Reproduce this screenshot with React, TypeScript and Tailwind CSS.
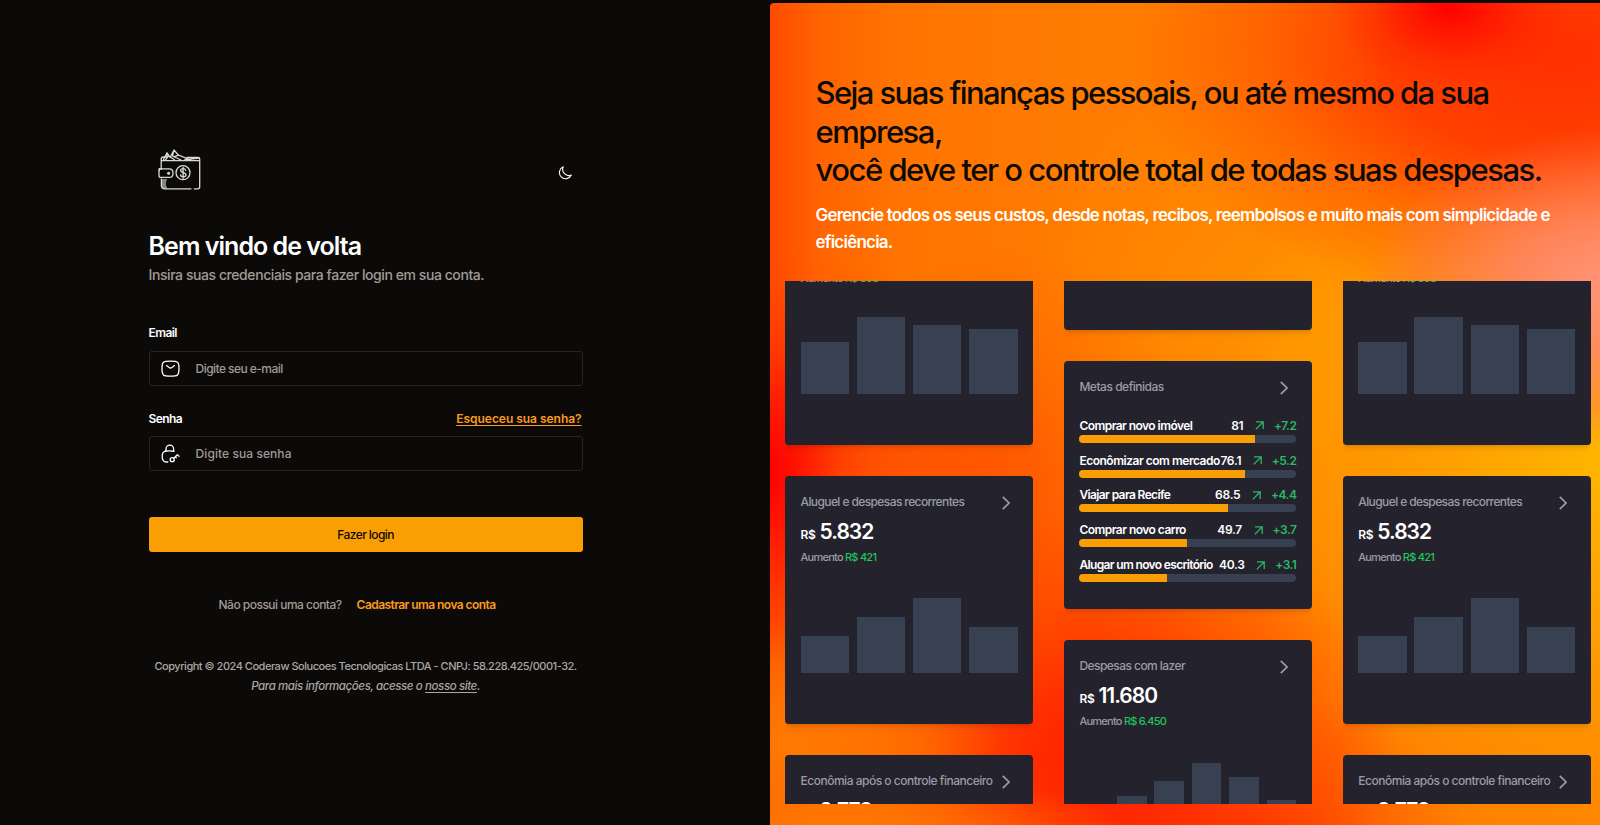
import React from "react";

const mesh = [
  "radial-gradient(ellipse 120px 80px at 680px 5px, rgba(255,0,0,1) 0%, rgba(255,0,0,.6) 30%, rgba(255,0,0,.2) 65%, rgba(255,0,0,0) 100%)",
  "radial-gradient(ellipse 100px 190px at 0px 470px, rgba(255,0,0,1) 0%, rgba(255,10,0,.7) 35%, rgba(255,30,0,.25) 70%, rgba(255,40,0,0) 100%)",
  "radial-gradient(ellipse 210px 130px at 20px 740px, rgba(255,122,0,1) 0%, rgba(255,118,0,.75) 45%, rgba(255,110,0,0) 100%)",
  "radial-gradient(ellipse 300px 60px at 60px 830px, rgba(255,128,0,.9) 0%, rgba(255,118,0,.5) 50%, rgba(255,110,0,0) 100%)",
  "radial-gradient(ellipse 300px 200px at 0px 450px, rgba(255,50,0,.7) 0%, rgba(255,60,0,.45) 45%, rgba(255,80,0,0) 100%)",
  "radial-gradient(ellipse 260px 160px at 850px 285px, rgba(255,150,125,1) 0%, rgba(255,135,105,.85) 40%, rgba(255,120,80,.45) 75%, rgba(255,110,50,0) 100%)",
  "radial-gradient(ellipse 430px 260px at 790px 50px, rgba(255,48,0,1) 0%, rgba(255,56,0,.9) 40%, rgba(255,70,0,.45) 70%, rgba(255,90,0,0) 100%)",
  "radial-gradient(ellipse 290px 260px at 340px 760px, rgba(255,28,0,1) 0%, rgba(255,36,0,.85) 30%, rgba(255,55,0,.45) 65%, rgba(255,80,0,0) 100%)",
  "radial-gradient(ellipse 200px 150px at 500px 840px, rgba(255,50,0,.8) 0%, rgba(255,70,0,.4) 55%, rgba(255,90,0,0) 100%)",
  "radial-gradient(ellipse 200px 300px at 240px 540px, rgba(255,60,0,.55) 0%, rgba(255,70,0,.3) 55%, rgba(255,100,0,0) 100%)",
  "radial-gradient(ellipse 400px 420px at 850px 450px, rgba(255,184,0,1) 0%, rgba(255,165,0,.7) 50%, rgba(255,150,0,0) 100%)",
  "radial-gradient(ellipse 300px 300px at 540px 340px, rgba(255,148,0,1) 0%, rgba(255,142,0,.65) 45%, rgba(255,130,0,0) 100%)",
  "linear-gradient(90deg, #ff4a00 0px, #ff6400 50px, #ff7400 130px, #ff7c00 330px, #ff8000 830px)",
].join(",");

function Chevron() {
  return (
    <svg className="h-[14px] w-2 shrink-0 text-[#9b9ba8]" viewBox="0 0 8 14" fill="none" stroke="currentColor" strokeWidth="1.7">
      <path d="M.8 .8 7 7 .8 13.2" />
    </svg>
  );
}

function Card({ title, tracking, children }: { title: string; tracking: string; children?: React.ReactNode }) {
  return (
    <article className="flex h-[248px] w-full shrink-0 flex-col rounded-[4px] bg-[#24232d] px-[15.5px] shadow-md">
      <header className="mt-[18px] flex h-4 items-center justify-between pr-[8px]">
        <h3 className={`text-[12px] leading-4 font-medium whitespace-nowrap text-[#9b9ba8] ${tracking}`}>{title}</h3>
        <div className="pt-[2px]">
          <Chevron />
        </div>
      </header>
      {children}
    </article>
  );
}

function Expense(props: { title: string; tracking: string; amount: string; rise: string; bars: number[] }) {
  return (
    <Card title={props.title} tracking={props.tracking}>
      <p className="mt-[10px] flex h-6 items-baseline gap-1 leading-6 font-semibold whitespace-nowrap text-white">
        <span className="text-[12px] tracking-[-0.3px]">R$</span>
        <span className="text-[21px] tracking-[-1px]">{props.amount}</span>
      </p>
      <p className="mt-[5px] text-[11px] leading-4 font-medium tracking-[-0.75px] text-[#9b9ba8]">
        Aumento <span className="text-[#22c55e]">{props.rise}</span>
      </p>
      <div className="mt-[31.5px] flex h-[77px] shrink-0 items-end gap-[7.8px]">
        {props.bars.map((h, i) => (
          <div key={i} className="flex-1 bg-[#374151]" style={{ height: h }} />
        ))}
      </div>
    </Card>
  );
}

const goals = [
  { name: "Comprar novo imóvel", tracking: "tracking-[-0.55px]", value: "81", rise: "+7.2", pct: 81 },
  { name: "Econômizar com mercado", tracking: "tracking-[-0.48px]", value: "76.1", rise: "+5.2", pct: 76.1 },
  { name: "Viajar para Recife", tracking: "tracking-[-0.62px]", value: "68.5", rise: "+4.4", pct: 68.5 },
  { name: "Comprar novo carro", tracking: "tracking-[-0.53px]", value: "49.7", rise: "+3.7", pct: 49.7 },
  { name: "Alugar um novo escritório", tracking: "tracking-[-0.65px]", value: "40.3", rise: "+3.1", pct: 40.3 },
];

function Goals() {
  return (
    <Card title="Metas definidas" tracking="tracking-[-0.48px]">
      <div className="mt-[22.5px] flex flex-col gap-[9.8px]">
        {goals.map((g) => (
          <div key={g.name} className="flex h-[25px] flex-col justify-between">
            <div className="flex h-4 items-center text-[12px] leading-4 font-semibold whitespace-nowrap text-white">
              <span className={`flex-1 ${g.tracking}`}>{g.name}</span>
              <span className="tracking-[-0.25px]">{g.value}</span>
              <svg className="mr-[10px] ml-[11.5px] size-[9px] text-[#2bb867]" viewBox="0 0 9 9" fill="none" stroke="currentColor" strokeWidth="1.3">
                <path d="M1 .8h7.2V8M8 1 .8 8.4" />
              </svg>
              <span className="tracking-[-0.5px] text-[#2bb867]">{g.rise}</span>
            </div>
            <div className="h-2 overflow-hidden rounded-full bg-[#374151]">
              <div className="h-full bg-[#fa9f03]" style={{ width: `${g.pct}%` }} />
            </div>
          </div>
        ))}
      </div>
    </Card>
  );
}

function SideColumn() {
  return (
    <div className="flex h-[523px] w-[248px] shrink-0 flex-col justify-start overflow-hidden">
      <div className="-mt-[84.5px] flex flex-col gap-[31px]">
        <Expense title="Alimentação" tracking="tracking-[-0.3px]" amount="2.530" rise="R$ 398" bars={[52, 77, 69, 65]} />
        <Expense title="Aluguel e despesas recorrentes" tracking="tracking-[-0.6px]" amount="5.832" rise="R$ 421" bars={[37, 56, 75, 46]} />
        <Expense title="Econômia após o controle financeiro" tracking="tracking-[-0.49px]" amount="2.778" rise="R$ 310" bars={[37, 56, 75, 46]} />
      </div>
    </div>
  );
}

function MiddleColumn() {
  return (
    <div className="flex h-[523px] w-[248px] shrink-0 flex-col justify-start overflow-hidden">
      <div className="-mt-[198.8px] flex flex-col gap-[31px]">
        <Card title="" tracking="" />
        <Goals />
        <Expense title="Despesas com lazer" tracking="tracking-[-0.55px]" amount="11.680" rise="R$ 6.450" bars={[25, 42, 56.5, 75, 61, 37.5]} />
      </div>
    </div>
  );
}

function WalletLogo() {
  return (
    <svg className="h-[42px] w-[43px] text-[#d8d8d6]" viewBox="0 0 43 42" fill="none" stroke="currentColor" strokeWidth="1.3" strokeLinecap="round" strokeLinejoin="round">
      <path d="M3.2 20V10.5c0-1.6.7-2.5 2.2-2.5H9M3.5 11.7h37.8M29 8.3h11c1.1 0 1.7.6 1.7 1.5v28c0 1.2-.9 2-2 2h-3.5M33 39.8H7c-2.300 0-3.600-1.200-3.600-3.300v-6.700" />
      <path d="M5.500 10.800 9 3.800l2.500 3.500M7.500 10.800l3-4 6 4M12 8.500 16 1l4.500 5.200L33 11M16 1l-1.500 6 8.500 4M20.500 6.200l-4 1.500M9 3.800v3.500M27 10.500c4-.5 8-1 14.300-1.500" />
      <path d="M1 21.500c0-1 .6-1.600 1.500-1.600h8.800c5 0 5 8.500 0 8.500H2.500C1.500 28.400 1 27.800 1 27z" />
      <path d="M1.200 21.500V19.700L3.200 20" />
      <circle cx="10.600" cy="24.200" r=".9" fill="currentColor" />
      <circle cx="25" cy="23.700" r="7" />
      <path d="M27.700 21.500c-.2-1.200-1.200-1.800-2.600-1.800s-2.500.7-2.500 1.900c0 2.800 5.400 1.400 5.400 4.200 0 1.300-1.200 2-2.700 2s-2.700-.7-2.800-2M25.100 18.300v11" />
      <path d="M3.400 30v6c0 2.300 1.600 3.800 4.500 3.800 1 0 1.500-.5 1-1.500-1.600-2.300-1.300-5.300.3-8.300z" fill="currentColor" stroke="none" opacity=".6" />
    </svg>
  );
}

function Field({ label, placeholder, icon, link, labelTracking, tracking }: { label: string; placeholder: string; icon: React.ReactNode; link?: boolean; labelTracking: string; tracking: string }) {
  return (
    <div className="flex flex-col">
      <div className="flex h-4 items-center justify-between text-[12px] leading-4 whitespace-nowrap">
        <label className={`font-semibold text-white ${labelTracking}`}>{label}</label>
        {link && <a className="pr-px font-semibold tracking-[-0.03px] text-[#fa9a1e] underline underline-offset-2">Esqueceu sua senha?</a>}
      </div>
      <div className={`${link ? "mt-[9px]" : "mt-[10px]"} flex h-[35px] items-center rounded-[3px] border border-[#272523] pl-[11px]`}>
        {icon}
        <span className={`ml-4 text-[12px] leading-4 font-medium whitespace-nowrap text-[#a09b96] ${tracking}`}>{placeholder}</span>
      </div>
    </div>
  );
}

function MailIcon() {
  return (
    <svg className="h-[18px] w-[19px] text-white" viewBox="0 0 19 18" fill="none" stroke="currentColor" strokeWidth="1.300" strokeLinecap="round" strokeLinejoin="round">
      <path d="M9.500 1.100c7.400 0 8.500.8 8.500 7.500s-1.100 7.600-8.500 7.600S1 15.300 1 8.600s1.100-7.500 8.500-7.500Z" />
      <path d="m5.500 5.600 2.600 1.900c.9.600 1.900.6 2.800 0l2.600-1.900" />
    </svg>
  );
}

function LockIcon() {
  return (
    <svg className="h-[19px] w-[19px] text-white" viewBox="0 0 19 19" fill="none" stroke="currentColor" strokeWidth="1.300" strokeLinecap="round" strokeLinejoin="round">
      <path d="M5 7V5a3.800 3.800 0 0 1 7.600 0v2M13 7.300C11.800 6.900 5.500 6.700 3.700 7.300c-1.800.6-2.500 2-2.500 5 0 3.600.9 5.500 3.700 5.700h1.900" />
      <circle cx="11.200" cy="15.700" r="2" />
      <path d="m12.700 14.200 3.600-3.400 1.700 1.500M14.300 12.800l1 1" />
    </svg>
  );
}

export default function App() {
  return (
    <main className="flex h-[825px] w-[1600px] overflow-hidden bg-[#0c0a09] font-['Inter',sans-serif] text-white">
      <section className="flex w-[770px] shrink-0 flex-col pl-[148.600px]">
        <div className="flex w-[434px] flex-col">
          <div className="mt-[149px] flex h-[42px] items-center justify-between pr-[11px] pl-[9px]">
            <WalletLogo />
            <svg className="mt-[6px] size-[14px] text-white" viewBox="0 0 14 14" fill="none" stroke="currentColor" strokeWidth="1.100" strokeLinejoin="round">
              <path d="M5.200.8A6.200 6.200 0 1 0 13.300 9 6.200 6.200 0 0 1 5.200.8Z" />
            </svg>
          </div>
          <h1 className="mt-[39px] text-[25px] leading-8 font-semibold tracking-[-0.970px] whitespace-nowrap">Bem vindo de volta</h1>
          <p className="mt-[3px] text-[14px] leading-5 font-medium tracking-[-0.430px] whitespace-nowrap text-[#a09b96]">Insira suas credenciais para fazer login em sua conta.</p>
          <div className="mt-[40px]">
            <Field label="Email" placeholder="Digite seu e-mail" icon={<MailIcon />} labelTracking="tracking-[-0.600px]" tracking="tracking-[-0.550px]" />
          </div>
          <div className="mt-[25px]">
            <Field label="Senha" placeholder="Digite sua senha" icon={<LockIcon />} link labelTracking="tracking-[-0.600px]" tracking="tracking-[0.070px]" />
          </div>
          <button className="mt-[46px] h-[35px] rounded-[3px] bg-[#fa9f03] text-[12px] leading-4 font-medium tracking-[-0.570px] text-[#0c0a09]">Fazer login</button>
          <p className="mt-[45px] flex justify-center gap-[15px] pr-[17px] text-[12px] leading-4 font-medium whitespace-nowrap text-[#a09b96]">
            <span className="tracking-[-0.520px]">Não possui uma conta?</span>
            <a className="font-semibold tracking-[-0.560px] text-[#fa9a1e]">Cadastrar uma nova conta</a>
          </p>
          <footer className="mt-[45px] flex flex-col items-center gap-[4px] leading-4 font-medium whitespace-nowrap text-[#aaa6a2]">
            <p className="text-[11px] leading-4 tracking-[-0.480px]">Copyright © 2024 Coderaw Solucoes Tecnologicas LTDA - CNPJ: 58.228.425/0001-32.</p>
            <p className="text-[11.500px] leading-4 tracking-[-0.400px] italic">Para mais informações, acesse o <a className="underline underline-offset-2">nosso site</a>.</p>
          </footer>
        </div>
      </section>
      <section className="mt-[3px] flex w-[830px] shrink-0 flex-col overflow-hidden rounded-tl-[4px]" style={{ background: mesh }}>
        <h2 className="mt-[71px] pl-[45.500px] text-[31px] leading-[38.700px] font-medium tracking-[-1.480px] whitespace-nowrap text-[#0c0a09]">
          <span className="tracking-[-1.590px]">Seja suas finanças pessoais, ou até mesmo da sua</span>
          <br />
          empresa,
          <br />
          você deve ter o controle total de todas suas despesas.
        </h2>
        <p className="mt-[12px] pl-[45.500px] text-[17px] leading-[27px] font-semibold tracking-[-0.780px] whitespace-nowrap text-white">
          Gerencie todos os seus custos, desde notas, recibos, reembolsos e muito mais com simplicidade e
          <br />
          eficiência.
        </p>
        <div className="mt-[25px] flex gap-[30.900px] pl-[15px]">
          <SideColumn />
          <MiddleColumn />
          <SideColumn />
        </div>
      </section>
    </main>
  );
}
